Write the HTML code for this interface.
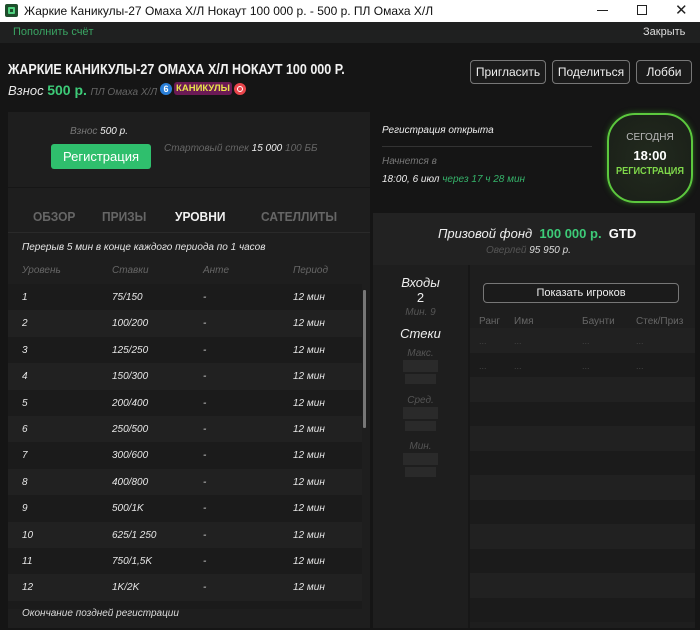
<!DOCTYPE html>
<html><head><meta charset="utf-8">
<style>
*{margin:0;padding:0;box-sizing:border-box}
body{width:700px;height:630px;overflow:hidden;background:#151515;font-family:"Liberation Sans","Noto Sans CJK SC",sans-serif;color:#ddd;position:relative}
.a{position:absolute;white-space:nowrap}
.i{font-style:italic}
.g{color:#3dcb78}
.btn{position:absolute;border:1px solid #777;border-radius:4px;background:#1b1b1b;color:#eee;font-size:12px;text-align:center;line-height:22px;height:24px}
.row{position:absolute;left:8px;width:354px;height:26.4px;font-size:10px;font-style:italic;color:#e6e6e6}
.row span{position:absolute;top:8px}
</style></head><body>
<div class="a" style="left:0;top:0;width:700px;height:22px;background:#fff"></div>
<div class="a" style="left:5px;top:4px;width:13px;height:13px;background:#1e4d2b;border-radius:2px"></div>
<div class="a" style="left:8px;top:7px;width:7px;height:7px;border:2px solid #4fd27f;border-radius:1px"></div>
<div class="a" style="left:24px;top:4px;font-size:12px;color:#111">Жаркие Каникулы-27 Омаха Х/Л Нокаут 100 000 р. - 500 р. ПЛ Омаха Х/Л</div>
<div class="a" style="left:597px;top:10px;width:11px;height:1px;background:#222"></div>
<div class="a" style="left:637px;top:5px;width:10px;height:10px;border:1px solid #222"></div>
<div class="a" style="left:675px;top:1px;font-size:15px;color:#222">✕</div>
<div class="a" style="left:0;top:22px;width:700px;height:21px;background:#1f2020"></div>
<div class="a" style="left:13px;top:26px;font-size:11px;color:#3aa563">Пополнить счёт</div>
<div class="a" style="left:643px;top:26px;font-size:11px;color:#ddd">Закрыть</div>
<div class="a" style="left:8px;top:61px;font-size:15px;font-weight:bold;color:#f2f2f2;transform:scaleX(0.835);transform-origin:0 0">ЖАРКИЕ КАНИКУЛЫ-27 ОМАХА Х/Л НОКАУТ 100 000 Р.</div>
<div class="a i" style="left:8px;top:82px;font-size:13px;color:#e6e6e6">Взнос <b class="g" style="font-style:normal;font-size:14px">500 р.</b> <span style="font-size:10px;color:#666">ПЛ Омаха Х/Л</span></div>
<div class="a" style="left:160px;top:83px;width:12px;height:12px;border-radius:50%;background:#2a7fd8;color:#fff;font-size:9px;text-align:center;line-height:12px;font-weight:bold">6</div>
<div class="a" style="left:174px;top:82px;width:58px;height:13px;border-radius:3px;background:#6b1a55;color:#e8e34a;font-size:9.5px;font-weight:bold;text-align:center;line-height:13px">КАНИКУЛЫ</div>
<div class="a" style="left:234px;top:83px;width:12px;height:12px;border-radius:50%;background:#e9454b"></div>
<div class="a" style="left:237px;top:86px;width:6px;height:6px;border-radius:50%;border:1.5px solid #fff"></div>
<div class="btn" style="left:470px;top:60px;width:76px">Пригласить</div>
<div class="btn" style="left:552px;top:60px;width:78px">Поделиться</div>
<div class="btn" style="left:636px;top:60px;width:56px">Лобби</div>
<div class="a" style="left:8px;top:112px;width:362px;height:516px;background:#1e1e1e"></div>
<div class="a" style="left:8px;top:187px;width:362px;height:1px;background:#161616"></div>
<div class="a i" style="left:70px;top:126px;font-size:10px;color:#777">Взнос <span style="color:#eee">500 р.</span></div>
<div class="a" style="left:51px;top:144px;width:100px;height:25px;border-radius:3px;background:#2fbf6d;color:#fff;font-size:13px;text-align:center;line-height:25px">Регистрация</div>
<div class="a i" style="left:164px;top:143px;font-size:10px;color:#666">Стартовый стек <span style="color:#eee">15 000</span> 100 ББ</div>
<div class="a" style="left:33px;top:209px;font-size:13px;font-weight:bold;color:#666;transform:scaleX(0.92);transform-origin:0 0">ОБЗОР</div>
<div class="a" style="left:102px;top:209px;font-size:13px;font-weight:bold;color:#666;transform:scaleX(0.92);transform-origin:0 0">ПРИЗЫ</div>
<div class="a" style="left:175px;top:209px;font-size:13px;font-weight:bold;color:#f2f2f2;transform:scaleX(0.92);transform-origin:0 0">УРОВНИ</div>
<div class="a" style="left:261px;top:209px;font-size:13px;font-weight:bold;color:#666;transform:scaleX(0.92);transform-origin:0 0">САТЕЛЛИТЫ</div>
<div class="a" style="left:8px;top:232px;width:362px;height:1px;background:#2a2a2a"></div>
<div class="a i" style="left:22px;top:242px;font-size:10px;color:#e6e6e6">Перерыв 5 мин в конце каждого периода по 1 часов</div>
<div class="a i" style="left:22px;top:265px;font-size:10px;color:#666">Уровень</div>
<div class="a i" style="left:112px;top:265px;font-size:10px;color:#666">Ставки</div>
<div class="a i" style="left:203px;top:265px;font-size:10px;color:#666">Анте</div>
<div class="a i" style="left:293px;top:265px;font-size:10px;color:#666">Период</div>
<div id="rows"></div>
<div class="a" style="left:363px;top:290px;width:3px;height:138px;background:#777;border-radius:1px"></div>
<div class="a i" style="left:22px;top:608px;font-size:10px;color:#ddd">Окончание поздней регистрации</div>
<div class="a i" style="left:382px;top:125px;font-size:10px;color:#eee">Регистрация открыта</div>
<div class="a" style="left:382px;top:146px;width:210px;height:1px;background:#333"></div>
<div class="a i" style="left:382px;top:156px;font-size:10px;color:#777">Начнется в</div>
<div class="a i" style="left:382px;top:174px;font-size:10px;color:#eee">18:00, 6 июл <span style="color:#35b36a">через 17 ч 28 мин</span></div>
<div class="a" style="left:607px;top:113px;width:86px;height:90px;border:2px solid #5cc83e;border-radius:28px;background:radial-gradient(#222a1e,#1a1f18);box-shadow:0 0 6px #2c6a1e"></div>
<div class="a" style="left:607px;top:132px;width:86px;text-align:center;font-size:10px;color:#bbb">СЕГОДНЯ</div>
<div class="a" style="left:607px;top:148px;width:86px;text-align:center;font-size:13px;font-weight:bold;color:#fff">18:00</div>
<div class="a" style="left:607px;top:166px;width:86px;text-align:center;font-size:10px;font-weight:bold;color:#7fd84a;transform:scaleX(0.92)">РЕГИСТРАЦИЯ</div>
<div class="a" style="left:373px;top:213px;width:322px;height:415px;background:#1e1e1e"></div>
<div class="a" style="left:373px;top:213px;width:322px;height:52px;background:#222"></div>
<div class="a i" style="left:438px;top:226px;font-size:13px;color:#eee">Призовой фонд <b style="font-style:normal;color:#3dcb78">&nbsp;100 000 р.</b> <b style="font-style:normal;color:#fff">&nbsp;GTD</b></div>
<div class="a i" style="left:486px;top:245px;font-size:10px;color:#555">Оверлей <span style="color:#ddd">95 950 р.</span></div>
<div class="a" style="left:468px;top:265px;width:2px;height:363px;background:#171717"></div>
<div class="a i" style="left:373px;top:275px;width:95px;text-align:center;font-size:13px;color:#eee">Входы</div>
<div class="a" style="left:373px;top:290px;width:95px;text-align:center;font-size:13px;color:#eee">2</div>
<div class="a i" style="left:373px;top:307px;width:95px;text-align:center;font-size:10px;color:#555">Мин. 9</div>
<div class="a i" style="left:373px;top:326px;width:95px;text-align:center;font-size:13px;color:#eee">Стеки</div>
<div class="a i" style="left:373px;top:348px;width:95px;text-align:center;font-size:10px;color:#555">Макс.</div>
<div class="a" style="left:403px;top:360px;width:35px;height:12px;background:#2a2a2a"></div>
<div class="a" style="left:405px;top:374px;width:31px;height:10px;background:#2a2a2a"></div>
<div class="a i" style="left:373px;top:395px;width:95px;text-align:center;font-size:10px;color:#555">Сред.</div>
<div class="a" style="left:403px;top:407px;width:35px;height:12px;background:#2a2a2a"></div>
<div class="a" style="left:405px;top:421px;width:31px;height:10px;background:#2a2a2a"></div>
<div class="a i" style="left:373px;top:441px;width:95px;text-align:center;font-size:10px;color:#555">Мин.</div>
<div class="a" style="left:403px;top:453px;width:35px;height:12px;background:#2a2a2a"></div>
<div class="a" style="left:405px;top:467px;width:31px;height:10px;background:#2a2a2a"></div>
<div class="a" style="left:483px;top:283px;width:196px;height:20px;border:1px solid #777;border-radius:4px;background:#1b1b1b;color:#eee;font-size:11px;text-align:center;line-height:18px">Показать игроков</div>
<div class="a" style="left:479px;top:316px;font-size:10px;color:#666">Ранг</div>
<div class="a" style="left:514px;top:316px;font-size:10px;color:#666">Имя</div>
<div class="a" style="left:582px;top:316px;font-size:10px;color:#666">Баунти</div>
<div class="a" style="left:636px;top:316px;font-size:10px;color:#666">Стек/Приз</div>
<div id="rt"></div>
<script>
var d=[["1","75/150"],["2","100/200"],["3","125/250"],["4","150/300"],["5","200/400"],["6","250/500"],["7","300/600"],["8","400/800"],["9","500/1K"],["10","625/1 250"],["11","750/1,5K"],["12","1K/2K"]];
var h="";d.forEach(function(r,i){h+='<div class="row" style="top:'+(284+i*26.4)+'px;background:'+(i%2?'#212121':'#1b1b1b')+'"><span style="left:14px">'+r[0]+'</span><span style="left:104px">'+r[1]+'</span><span style="left:195px">-</span><span style="left:285px">12 мин</span></div>'});
h+='<div class="row" style="top:600.8px;height:8px;background:#1b1b1b"></div>';
document.getElementById("rows").innerHTML=h;
var t="";for(var i=0;i<12;i++){var y=328+i*24.5;if(y>628)break;t+='<div class="a" style="left:470px;top:'+y+'px;width:225px;height:24.5px;background:'+(i%2?'#1b1b1b':'#212121')+'"></div>';}
var c=[479,514,582,636];[336,361].forEach(function(y){c.forEach(function(x){t+='<div class="a" style="left:'+x+'px;top:'+y+'px;font-size:9px;color:#444">...</div>'})});
document.getElementById("rt").innerHTML=t;
</script>
</body></html>
